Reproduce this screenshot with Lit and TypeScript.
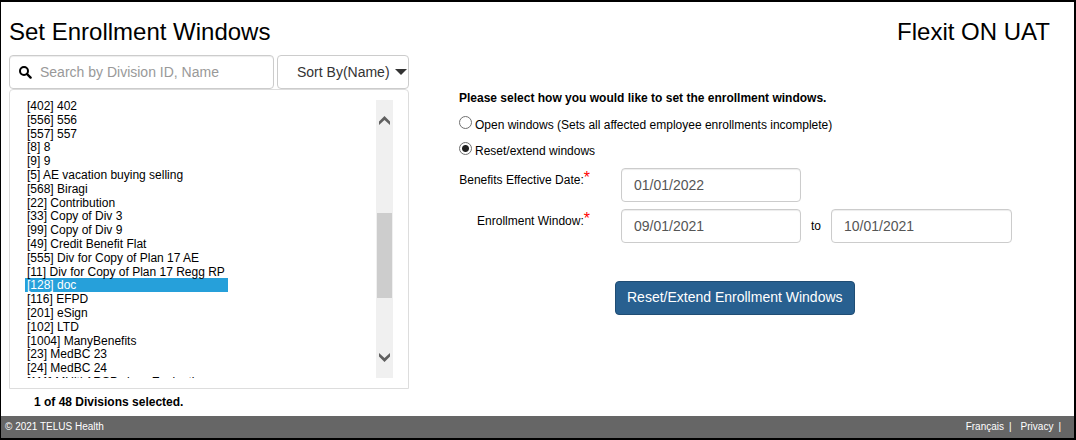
import { LitElement, html, css } from "lit";
import { customElement, state } from "lit/decorators.js";

const DIVISIONS = [
  "[402] 402",
  "[556] 556",
  "[557] 557",
  "[8] 8",
  "[9] 9",
  "[5] AE vacation buying selling",
  "[568] Biragi",
  "[22] Contribution",
  "[33] Copy of Div 3",
  "[99] Copy of Div 9",
  "[49] Credit Benefit Flat",
  "[555] Div for Copy of Plan 17 AE",
  "[11] Div for Copy of Plan 17 Regg RP",
  "[128] doc",
  "[116] EFPD",
  "[201] eSign",
  "[102] LTD",
  "[1004] ManyBenefits",
  "[23] MedBC 23",
  "[24] MedBC 24",
  "[111] MUlti ARSP class Evaluation",
];

@customElement("app-root")
export class AppRoot extends LitElement {
  @state() private selected = "[128] doc";
  @state() private mode = "reset";

  static styles = css`
    :host {
      box-sizing: border-box;
      min-height: 100vh;
      border: 2px solid #000;
      border-left-width: 1px;
      background: #fff;
      color: #000;
      font: 12px/16px "Liberation Sans", Arial, sans-serif;
      display: flex;
      flex-direction: column;
    }
    * {
      box-sizing: border-box;
    }
    .header {
      display: flex;
      justify-content: space-between;
      padding: 16px 24px 9px 8px;
    }
    .title {
      margin: 0;
      font-size: 24px;
      line-height: 28px;
      font-weight: 400;
    }
    .main {
      flex: 1;
      display: grid;
      grid-template-columns: 400px 1fr;
      column-gap: 50px;
      padding: 0 8px;
    }
    .toolbar {
      display: flex;
      gap: 3px;
    }
    .field {
      height: 34px;
      border: 1px solid #ccc;
      border-radius: 4px;
      background: #fff;
      box-shadow: inset 0 1px 1px rgba(0, 0, 0, 0.075);
      color: #555;
      font: 14px/20px "Liberation Sans", Arial, sans-serif;
      padding: 0 12px;
      min-width: 0;
    }
    .search {
      flex: 1;
      display: flex;
      align-items: center;
      gap: 8px;
      padding: 0 9px;
    }
    .search-input {
      flex: 1;
      min-width: 0;
      border: 0;
      outline: 0;
      padding: 0;
      background: none;
      font: inherit;
      color: #555;
    }
    .search-input::placeholder {
      color: #999;
      opacity: 1;
    }
    .sort {
      position: relative;
      width: 132px;
    }
    .sort-select {
      appearance: none;
      width: 100%;
      padding: 0 0 0 19px;
      color: #333;
      box-shadow: none;
    }
    .caret {
      position: absolute;
      right: 2px;
      top: 14px;
      pointer-events: none;
    }
    .panel {
      display: flex;
      justify-content: space-between;
      height: 300px;
      border: 1px solid #ddd;
      border-radius: 4px 4px 0 0;
      padding: 9px 15px 10px;
    }
    .viewport {
      overflow: hidden;
      height: 279px;
    }
    .divisions {
      display: block;
      width: 203px;
      height: 290px;
      margin: 0;
      padding: 0;
      border: 0;
      outline: 0;
      overflow: hidden;
      background: none;
      color: #000;
      font: 12px/1.15 "Liberation Sans", Arial, sans-serif;
    }
    .division {
      height: 1.15em;
      min-height: 0;
      padding: 0 2px;
    }
    .division:checked {
      background: #26a0da linear-gradient(#26a0da, #26a0da);
      color: #fff;
    }
    .scrollbar {
      display: flex;
      flex-direction: column;
      align-items: center;
      justify-content: space-between;
      width: 17px;
      margin-top: 1px;
      padding: 16px 1px;
      background: #f0f0f0;
    }
    .thumb {
      width: 15px;
      height: 85px;
      margin-top: 32px;
      background: #cdcdcd;
    }
    .count {
      margin: 5px 0 6px 25px;
      font-weight: 700;
    }
    .form {
      margin: 0;
      padding-top: 35px;
    }
    .modes {
      border: 0;
      margin: 0;
      padding: 0;
    }
    .legend {
      padding: 0;
      font-weight: 700;
    }
    .mode {
      display: flex;
      align-items: flex-start;
      gap: 3px;
      height: 18px;
      margin-top: 8px;
    }
    .mode-text {
      padding-top: 3px;
    }
    .radio {
      appearance: none;
      flex: none;
      width: 13px;
      height: 13px;
      margin: 2px 0 0;
      border: 1px solid #707070;
      border-radius: 50%;
      background: #fff;
    }
    .radio:checked {
      background: radial-gradient(circle, #222 3px, #fff 4px);
    }
    .dates {
      display: grid;
      grid-template-columns: 162px 180px 30px 181px;
      row-gap: 7px;
      margin-top: 10px;
    }
    .label {
      grid-column: 1;
      display: flex;
      justify-content: flex-end;
      padding: 4px 31px 0 0;
    }
    .star {
      color: #f00;
      font-size: 16px;
      line-height: 12px;
    }
    .to {
      justify-self: center;
      align-self: center;
    }
    .submit {
      height: 34px;
      margin: 38px 0 0 156px;
      padding: 0 11px 2px;
      border: 1px solid #204d74;
      border-radius: 4px;
      background: #286090;
      color: #fff;
      font: 14px/20px "Liberation Sans", Arial, sans-serif;
      white-space: nowrap;
    }
    .footer {
      display: flex;
      justify-content: space-between;
      padding: 0 13px 0 4px;
      background: #666;
      color: #fff;
      font-size: 10px;
      line-height: 22px;
    }
    .links {
      display: flex;
      gap: 5px;
    }
    .link {
      color: #fff;
      text-decoration: none;
    }
    .link + .bar + .link {
      margin-left: 4px;
    }
  `;

  render() {
    return html`
      <header class="header">
        <h1 class="title">Set Enrollment Windows</h1>
        <h2 class="title">Flexit ON UAT</h2>
      </header>
      <main class="main">
        <section>
          <div class="toolbar">
            <label class="field search">
              <svg width="13" height="13" viewBox="0 0 13 13" fill="none" stroke="#000" aria-hidden="true">
                <circle cx="5" cy="5" r="4" stroke-width="2" />
                <path d="M8 8l3.6 3.6" stroke-width="2.4" stroke-linecap="round" />
              </svg>
              <input class="search-input" type="text" aria-label="Search" placeholder="Search by Division ID, Name" />
            </label>
            <div class="sort">
              <select class="field sort-select" aria-label="Sort by">
                <option>Sort By(Name)</option>
              </select>
              <svg class="caret" width="12" height="6" viewBox="0 0 12 6" aria-hidden="true">
                <path d="M0 0h12l-6 6z" fill="#333" />
              </svg>
            </div>
          </div>
          <div class="panel">
            <div class="viewport">
              <select
                class="divisions"
                multiple
                size="21"
                aria-label="Divisions"
                @change=${(e: Event) => (this.selected = (e.target as HTMLSelectElement).value)}
              >
                ${DIVISIONS.map(
                  (d) => html`<option class="division" ?selected=${d === this.selected}>${d}</option>`,
                )}
              </select>
            </div>
            <div class="scrollbar" aria-hidden="true">
              <svg width="11" height="9" viewBox="0 0 11 9"><path d="M0 5.5L5.5 0 11 5.5V9L5.5 4 0 9z" fill="#606060" /></svg>
              <div class="thumb"></div>
              <svg width="11" height="9" viewBox="0 0 11 9"><path d="M0 3.5L5.5 9 11 3.5V0L5.5 5 0 0z" fill="#606060" /></svg>
            </div>
          </div>
          <p class="count">1 of 48 Divisions selected.</p>
        </section>
        <form class="form">
          <fieldset class="modes">
            <legend class="legend">Please select how you would like to set the enrollment windows.</legend>
            <label class="mode">
              <input class="radio" type="radio" name="mode" value="open" .checked=${this.mode === "open"}
                @change=${() => (this.mode = "open")} />
              <span class="mode-text">Open windows (Sets all affected employee enrollments incomplete)</span>
            </label>
            <label class="mode">
              <input class="radio" type="radio" name="mode" value="reset" .checked=${this.mode === "reset"}
                @change=${() => (this.mode = "reset")} />
              <span class="mode-text">Reset/extend windows</span>
            </label>
          </fieldset>
          <div class="dates">
            <label class="label" for="effective">Benefits Effective Date:<span class="star">*</span></label>
            <input class="field" id="effective" type="text" value="01/01/2022" />
            <label class="label" for="from">Enrollment Window:<span class="star">*</span></label>
            <input class="field" id="from" type="text" value="09/01/2021" />
            <label class="to" for="until">to</label>
            <input class="field" id="until" type="text" value="10/01/2021" />
          </div>
          <button class="submit" type="button">Reset/Extend Enrollment Windows</button>
        </form>
      </main>
      <footer class="footer">
        <span>© 2021 TELUS Health</span>
        <nav class="links">
          <a class="link" href="#fr">Français</a><span class="bar">|</span>
          <a class="link" href="#privacy">Privacy</a><span class="bar">|</span>
        </nav>
      </footer>
    `;
  }
}
